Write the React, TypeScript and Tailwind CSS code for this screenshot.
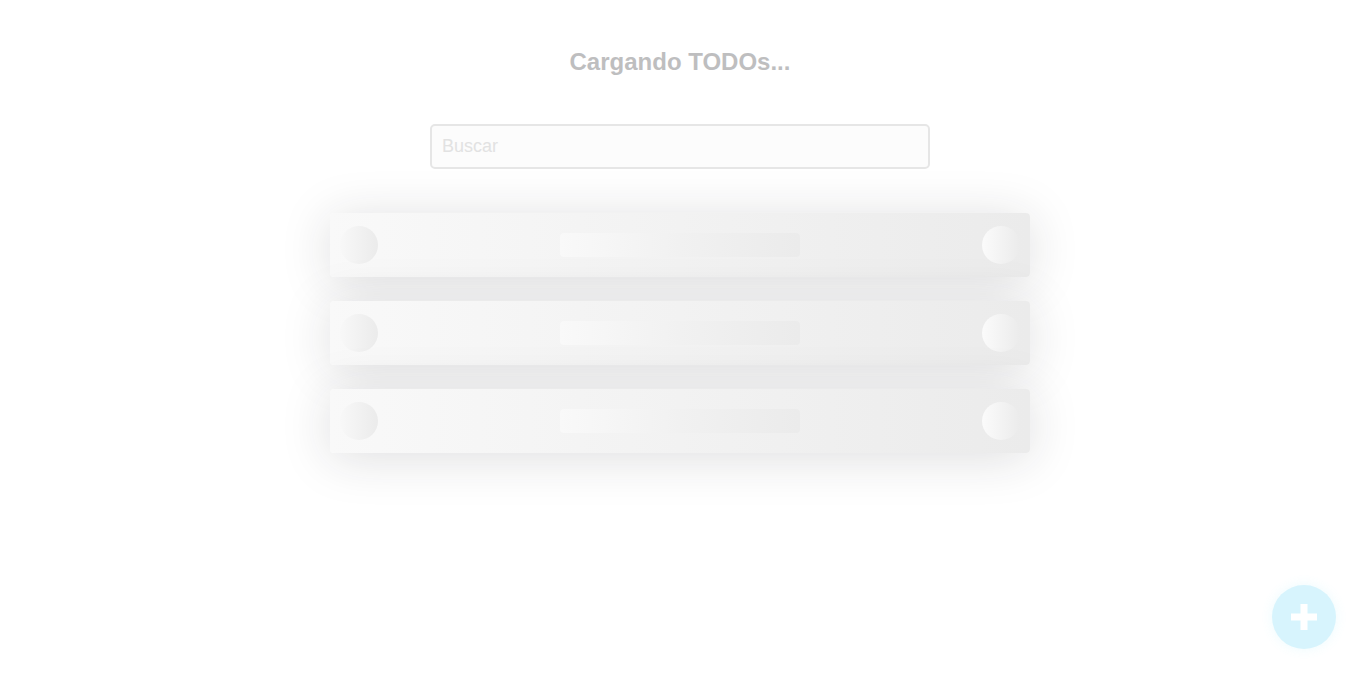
const LoadingTodo = () => (
  <li className="flex h-16 w-[700px] items-center justify-between rounded px-2.5 bg-gradient-to-r from-[#f9f9f9] via-[#f2f2f2] to-[#ebebeb] shadow-[0_5px_50px_rgba(32,35,41,0.15)]">
    <span className="h-[38px] w-[38px] rounded-full bg-gradient-to-r from-[#f8f8f8] to-[#ebebeb]" />
    <span className="h-6 w-60 rounded bg-gradient-to-r from-[#f9f9f9] via-[#f1f1f1] to-[#ebebeb]" />
    <span className="h-[38px] w-[38px] rounded-full bg-gradient-to-r from-[#fbfbfb] to-[#ebebeb]" />
  </li>
);

export default function App() {
  return (
    <div className="relative min-h-[673px] w-full bg-white font-['Liberation_Sans',Arial,sans-serif]">
      <h1 className="pt-[46px] text-center text-2xl leading-8 font-bold text-[#bebebf]">
        Cargando TODOs...
      </h1>

      <div className="mt-[46px] flex justify-center">
        <input
          className="h-[45px] w-[500px] rounded-[5px] border-2 border-[#e6e6e6] bg-[#fcfcfc] px-2.5 text-lg text-[#c0c0c0] outline-none placeholder:text-[#e2e2e2]"
          placeholder="Buscar"
        />
      </div>

      <ul className="mt-11 flex flex-col items-center gap-6">
        <LoadingTodo />
        <LoadingTodo />
        <LoadingTodo />
      </ul>

      <button className="absolute right-6 bottom-6 flex h-16 w-16 items-center justify-center rounded-full bg-[#d7f4fd] shadow-[0_0_12px_rgba(97,218,250,0.12)]">
        <svg width="26" height="26" viewBox="0 0 26 26">
          <rect x="9.5" y="0" width="7" height="26" fill="#fff" />
          <rect x="0" y="9.5" width="26" height="7" fill="#fff" />
        </svg>
      </button>
    </div>
  );
}
